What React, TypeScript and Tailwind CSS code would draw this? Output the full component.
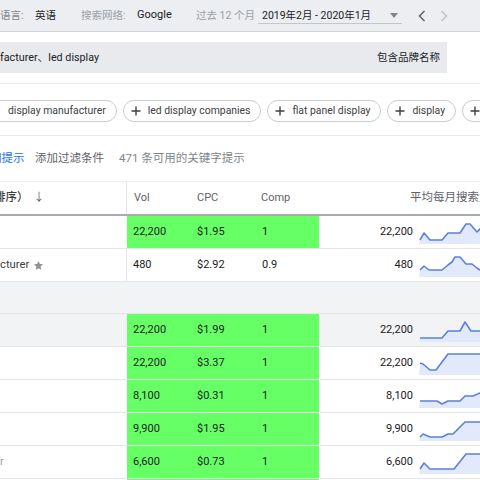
import React from 'react';

const font = { fontFamily: 'Roboto, "Noto Sans CJK SC", sans-serif' };

interface Row {
  name?: string;
  star?: boolean;
  vol: string;
  cpc: string;
  comp: string;
  avg: string;
  green: boolean;
  gray?: boolean;
  spark: number[][];
}

const rows: Row[] = [
  { vol: '22,200', cpc: '$1.95', comp: '1', avg: '22,200', green: true,
    spark: [[1, 20], [5, 13], [11, 20], [23, 20], [29, 13], [41, 13], [47, 4], [51, 4], [58, 12], [64, 6], [80, 6]] },
  { name: 'cturer', star: true, vol: '480', cpc: '$2.92', comp: '0.9', avg: '480', green: false,
    spark: [[1, 17], [5, 13], [10, 17], [23, 17], [29, 12], [33, 9], [36, 4], [41, 4], [47, 11], [53, 11], [58, 15], [61, 17], [70, 12], [80, 12]] },
];

const rows2: Row[] = [
  { vol: '22,200', cpc: '$1.99', comp: '1', avg: '22,200', green: true, gray: true,
    spark: [[1, 20], [23, 20], [29, 13], [41, 13], [46, 4], [52, 13], [80, 13]] },
  { vol: '22,200', cpc: '$3.37', comp: '1', avg: '22,200', green: true,
    spark: [[1, 12], [4, 13], [11, 19], [17, 19], [23, 11], [29, 3], [80, 3]] },
  { vol: '8,100', cpc: '$0.31', comp: '1', avg: '8,100', green: true,
    spark: [[1, 17], [18, 17], [23, 20], [29, 17], [41, 17], [46, 12], [54, 12], [61, 9], [80, 6]] },
  { vol: '9,900', cpc: '$1.95', comp: '1', avg: '9,900', green: true,
    spark: [[1, 20], [4, 17], [11, 20], [23, 20], [29, 17], [34, 17], [46, 5], [80, 5]] },
  { name: 'r', vol: '6,600', cpc: '$0.73', comp: '1', avg: '6,600', green: true,
    spark: [[1, 19], [5, 13], [11, 19], [35, 19], [47, 4], [80, 4]] },
  { vol: '6,600', cpc: '$0.73', comp: '1', avg: '6,600', green: true,
    spark: [[1, 19], [5, 13], [11, 19], [35, 19], [47, 4], [80, 4]] },
];

function Sparkline({ points }: { points: number[][] }) {
  const line = points.map((p) => p.join(',')).join(' ');
  const area = `0,24 ${line} 80,24`;
  return (
    <svg width="80" height="24" viewBox="0 0 80 24" className="shrink-0">
      <polygon points={area} fill="#e2e9fb" />
      <polyline points={line} fill="none" stroke="#5b7fe3" strokeWidth="1.6" strokeLinejoin="round" />
    </svg>
  );
}

function Plus() {
  return (
    <svg width="10" height="10" viewBox="0 0 10 10" className="shrink-0">
      <path d="M5 0.5V9.5M0.5 5H9.5" stroke="#3c4043" strokeWidth="1.4" />
    </svg>
  );
}

function Chip({ label }: { label: string }) {
  return (
    <div className="flex h-[22px] shrink-0 items-center gap-[7px] rounded-full border border-[#c9ccd0] pl-[7px] pr-[10px] text-[10.4px] text-[#3c4043]">
      <Plus />
      <span>{label}</span>
    </div>
  );
}

function Star() {
  return (
    <svg width="11" height="11" viewBox="0 0 24 24">
      <path d="M12 2l2.9 6.9 7.1.6-5.4 4.7 1.6 7.3L12 17.8 5.8 21.5l1.6-7.3L2 9.5l7.1-.6z" fill="#8d9196" />
    </svg>
  );
}

function TableRow({ row }: { row: Row }) {
  const side = row.gray ? 'bg-[#f1f3f4]' : 'bg-white';
  const cell = row.green ? 'bg-[#66ff66]' : side;
  return (
    <div className="flex h-[33px] shrink-0 border-b border-[#e3e5e8] text-[11px] text-[#202124]">
      <div className={`flex w-[127px] shrink-0 items-center gap-[4px] overflow-hidden border-r border-[#e3e5e8] text-[11.25px] ${side} ${row.green ? 'border-r-transparent' : ''}`}>
        {row.name && <span className={row.star ? 'text-[#3c4043]' : 'text-[#9aa0a6]'}>{row.name}</span>}
        {row.star && <Star />}
      </div>
      <div className={`flex w-[192px] shrink-0 items-center ${cell}`}>
        <span className="w-[63px] pl-[6px]">{row.vol}</span>
        <span className="w-[64px] pl-[7px]">{row.cpc}</span>
        <span className="w-[65px] pl-[8px]">{row.comp}</span>
      </div>
      <div className={`flex flex-1 items-center ${side}`}>
        <span className="w-[94px] shrink-0 text-right">{row.avg}</span>
        <div className="ml-[6px]">
          <Sparkline points={row.spark} />
        </div>
      </div>
    </div>
  );
}

export default function App() {
  return (
    <div className="flex h-[480px] w-[480px] flex-col overflow-hidden bg-white" style={font}>
      {/* top settings bar */}
      <div className="flex h-[32px] shrink-0 items-center border-b border-[#d2d5d8] bg-[#eceef1] text-[10.5px]">
        <span className="w-[35px] shrink-0 text-[#80868b]">语言:</span>
        <span className="w-[46px] shrink-0 text-[#202124]">英语</span>
        <span className="w-[56px] shrink-0 text-[#9aa0a6]">搜索网络:</span>
        <span className="w-[59px] shrink-0 text-[11px] text-[#202124]">Google</span>
        <span className="w-[66px] shrink-0 text-[#9aa0a6]">过去 12 个月</span>
        <div className="relative flex w-[156px] shrink-0 items-center">
          <span className="text-[#202124]">2019年2月 - 2020年1月</span>
          <svg width="8" height="5" viewBox="0 0 8 5" className="ml-[19px]">
            <path d="M0 0H8L4 5z" fill="#80868b" />
          </svg>
          <div className="absolute left-[-4px] top-[15px] h-px w-[144px] bg-[#c4c7ca]" />
        </div>
        <svg width="8" height="12" viewBox="0 0 8 12">
          <path d="M6.5 1L1.5 6l5 5" fill="none" stroke="#5f6368" strokeWidth="1.5" />
        </svg>
        <svg width="8" height="12" viewBox="0 0 8 12" className="ml-[14px]">
          <path d="M1.5 1l5 5-5 5" fill="none" stroke="#bdc1c6" strokeWidth="1.5" />
        </svg>
      </div>

      {/* keyword box */}
      <div className="mt-[10px] flex h-[31px] w-[447px] shrink-0 items-center justify-between bg-[#e8eaed] pr-[7px] pt-px text-[10.75px] text-[#202124]">
        <span>facturer、led display</span>
        <span className="text-[10.5px]">包含品牌名称</span>
      </div>

      {/* refine chips */}
      <div className="mt-[10px] flex h-[53px] shrink-0 items-center gap-[6px] border-y border-[#e8eaed] pt-[2px]">
        <div className="ml-[-20px] flex h-[22px] shrink-0 items-center rounded-full border border-[#c9ccd0] pl-[27px] pr-[10px] text-[10.4px] text-[#3c4043]">
          display manufacturer
        </div>
        <Chip label="led display companies" />
        <Chip label="flat panel display" />
        <Chip label="display" />
        <Chip label="display size" />
      </div>

      {/* filter line */}
      <div className="flex h-[45px] shrink-0 items-center text-[11.5px]">
        <span className="ml-[-10px] w-[45px] shrink-0 text-[#1a73e8]">词提示</span>
        <span className="w-[84px] shrink-0 text-[#5f6368]">添加过滤条件</span>
        <span className="text-[#80868b]">471 条可用的关键字提示</span>
      </div>

      {/* table header */}
      <div className="flex h-[35px] shrink-0 border-t border-b-2 border-t-[#eceef1] border-b-[#a8abaf] text-[11px] text-[#5f6368]">
        <div className="flex w-[127px] shrink-0 items-center border-r border-[#e3e5e8]">
          <span className="ml-[-6px] text-[11.5px] font-medium text-[#3c4043]">排序）</span>
          <span className="ml-[5px]">↓</span>
        </div>
        <span className="flex w-[63px] shrink-0 items-center pl-[7px]">Vol</span>
        <span className="flex w-[64px] shrink-0 items-center pl-[7px]">CPC</span>
        <span className="flex w-[65px] shrink-0 items-center pl-[7px]">Comp</span>
        <span className="flex flex-1 items-center whitespace-nowrap pl-[91px] text-[11.5px]">平均每月搜索量</span>
      </div>

      {rows.map((r, i) => (
        <TableRow key={i} row={r} />
      ))}
      <div className="h-[32px] shrink-0 border-b border-[#e3e5e8] bg-[#f1f3f4]" />
      {rows2.map((r, i) => (
        <TableRow key={i} row={r} />
      ))}
    </div>
  );
}
